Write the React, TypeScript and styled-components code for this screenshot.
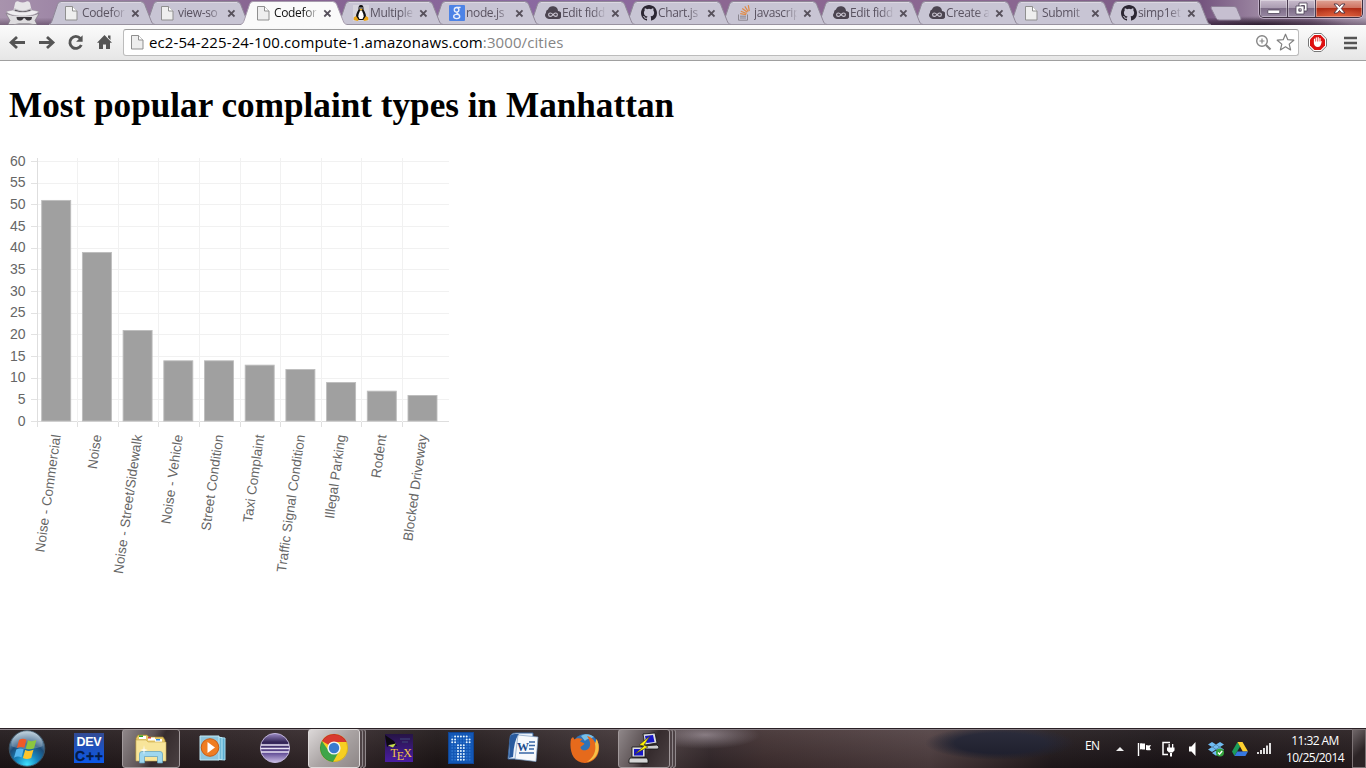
import React from "react";
import styled, { createGlobalStyle, css } from "styled-components";

const UI_FONT = '"Open Sans", "Noto Sans", sans-serif';

const GlobalStyle = createGlobalStyle`
  * { box-sizing: border-box; }
  html, body { margin: 0; padding: 0; background: #fff; overflow: hidden; }
  svg { display: block; }
`;

const Desktop = styled.div`
  width: 1366px;
  height: 768px;
  display: flex;
  flex-direction: column;
  overflow: hidden;
  font-family: ${UI_FONT};
`;

/* ---------- title bar ---------- */

const TitleBar = styled.header`
  height: 25px;
  flex: none;
  display: flex;
  align-items: flex-start;
  position: relative;
  background:
    linear-gradient(180deg, rgba(0, 0, 0, 0) 70%, rgba(30, 10, 30, 0.35) 100%),
    radial-gradient(90px 9px at 1260px 25px, rgba(25, 12, 28, 0.8), transparent),
    linear-gradient(90deg, #a893ad 0%, #9c84a5 5%, #866390 20%, #8b6aa3 42%, #8c6792 52%, #8a6791 75%, #75557f 88%, #9a84a0 92%, #8d7593 96%, #b3a3b8 100%);
`;

const Incognito = styled.div`
  width: 49px;
  height: 25px;
  flex: none;
`;

const TabList = styled.nav`
  display: flex;
`;

const TabItem = styled.div<{ $active?: boolean; $order: number }>`
  width: 96px;
  height: 25px;
  flex: none;
  position: relative;
  z-index: ${(p) => (p.$active ? 30 : p.$order)};
  display: flex;
  align-items: center;
  padding: 1px 0 0 16px;
  color: ${(p) => (p.$active ? "#111" : "#5a5361")};
`;

const TabShape = styled.svg`
  position: absolute;
  left: 0;
  top: 0;
  z-index: -1;
`;

const TabIcon = styled.span`
  width: 16px;
  height: 16px;
  flex: none;
  margin-right: 1px;
`;

const TabTitle = styled.span`
  width: 43px;
  height: 17px;
  line-height: 16px;
  font-size: 12px;
  letter-spacing: -0.35px;
  white-space: nowrap;
  mask-image: linear-gradient(90deg, #000 70%, rgba(0, 0, 0, 0.25) 96%, transparent 100%);
`;

const TabClose = styled.svg`
  margin-left: 6px;
  flex: none;
`;

const NewTab = styled.svg`
  margin-left: 9px;
  flex: none;
`;

const WindowControls = styled.div`
  position: absolute;
  right: 3px;
  top: 0;
  width: 104px;
  height: 18px;
  display: flex;
  border: 1px solid #3b2d3f;
  border-top: 0;
  border-radius: 0 0 5px 5px;
  box-shadow: 0 0 0 1px rgba(230, 215, 235, 0.55);
  overflow: hidden;
`;

const ControlButton = styled.button<{ $kind?: "close" }>`
  width: 28px;
  flex: ${(p) => (p.$kind ? "1" : "none")};
  height: 17px;
  padding: 0;
  border: 0;
  border-right: 1px solid #4a3b50;
  box-shadow: inset 0 0 0 1px rgba(255, 255, 255, 0.35);
  display: flex;
  justify-content: center;
  align-items: center;
  background: linear-gradient(#c9bccd 0%, #ab9db2 45%, #7e6d88 50%, #9888a2 100%);
  ${(p) =>
    p.$kind &&
    css`
      border-right: 0;
      background: radial-gradient(30px 9px at 50% 100%, #e5603c, transparent),
        linear-gradient(#dfa396 0%, #cf7361 45%, #b02c16 50%, #c04a2e 100%);
    `}
`;

/* ---------- toolbar ---------- */

const Toolbar = styled.div`
  height: 36px;
  flex: none;
  display: flex;
  align-items: center;
  padding: 0 9px 0 9px;
  background: linear-gradient(#fbfbfb, #e6e6e6);
  border-bottom: 1px solid #a0a0a0;
`;

const NavButtons = styled.div`
  width: 114px;
  height: 36px;
  flex: none;
`;

const AddressBar = styled.div`
  flex: 1;
  height: 27px;
  margin-top: -1px;
  display: flex;
  align-items: center;
  padding: 0 3px 0 7px;
  background: #fff;
  border: 1px solid #bcbcbc;
  border-top-color: #9c9c9c;
  border-radius: 3px;
`;

const Url = styled.span`
  flex: 1;
  margin-left: 2px;
  font-size: 15px;
  line-height: 20px;
  letter-spacing: 0.1px;
  color: #000;
  white-space: nowrap;
`;

const UrlTail = styled.span`
  color: #858585;
`;

const ToolbarIcons = styled.div`
  width: 49px;
  display: flex;
  align-items: center;
  justify-content: space-between;
  margin-left: 9px;
`;

/* ---------- page ---------- */

const Page = styled.main`
  flex: 1;
  background: #fff;
  padding: 22px 9px 0;
  overflow: hidden;
`;

const Heading = styled.h1`
  margin: 0;
  height: 67px;
  font: bold 35.2px/45px "Liberation Serif", "Times New Roman", serif;
  color: #000;
  white-space: nowrap;
`;

const Chart = styled.svg`
  font-family: "Liberation Sans", Arial, sans-serif;
  font-size: 13.5px;
  fill: #666;
`;

/* ---------- taskbar ---------- */

const Taskbar = styled.footer`
  height: 40px;
  flex: none;
  display: flex;
  align-items: stretch;
  border-top: 1px solid #2a2025;
  box-shadow: inset 0 1px 0 #8d848a;
  color: #fff;
  background:
    linear-gradient(180deg, rgba(255, 255, 255, 0.08), rgba(0, 0, 0, 0.12)),
    radial-gradient(75px 17px at 1000px 14px, #1b1c2c 60%, transparent 100%),
    radial-gradient(55px 14px at 705px 6px, #82757c, transparent),
    linear-gradient(90deg, #1d1517 0%, #2a1f21 18%, #33272a 25%, #1c1415 32%, #352a2c 42%, #46393b 49%, #33272a 52%, #402f30 56%, #4f3e40 68%, #21191c 77%, #1a1316 85%, #251b1d 100%);
`;

const StartSlot = styled.div`
  width: 58px;
  flex: none;
  padding: 1px 0 0 8px;
`;

const TaskSlot = styled.div`
  width: 62px;
  flex: none;
  display: flex;
  justify-content: center;
`;

const TaskButton = styled.div<{ $look: "plain" | "open" | "active"; $stacked?: boolean }>`
  width: ${(p) => (p.$stacked ? 52 : 58)}px;
  height: 39px;
  display: flex;
  align-items: center;
  justify-content: center;
  padding-bottom: 2px;
  border: 1px solid transparent;
  border-radius: 3px;
  ${(p) =>
    p.$look === "open" &&
    css`
      border-color: #a29a9c;
      background: linear-gradient(115deg, #8f8789 0%, #5c5254 45%, #352b2d 60%, #4a4042 100%);
    `}
  ${(p) =>
    p.$look === "active" &&
    css`
      border-color: #dedada;
      background: linear-gradient(135deg, #dcd8d8 0%, #aaa4a4 50%, #8e8787 100%);
    `}
`;

const StackEdge = styled.div`
  width: 3px;
  height: 39px;
  border: 1px solid #8f878a;
  border-left: 0;
  border-radius: 0 3px 3px 0;
  background: #4d4245;
`;

const Tray = styled.div`
  margin-left: auto;
  display: flex;
  align-items: center;
`;

const Language = styled.span`
  width: 31px;
  font-size: 12px;
  letter-spacing: -0.7px;
  margin-top: -6px;
`;

const TrayIcons = styled.div`
  width: 167px;
  height: 39px;
`;

const Clock = styled.div`
  width: 64px;
  text-align: center;
  font-size: 12px;
  line-height: 17px;
  letter-spacing: -0.58px;
  white-space: nowrap;
`;

const ShowDesktop = styled.div`
  width: 14px;
  height: 39px;
  margin-left: 5px;
  border: 1px solid #7c7375;
  background: linear-gradient(135deg, #6f6668, #2c2426 60%);
`;

/* ---------- icons ---------- */

const DocIcon = () => (
  <svg width="16" height="16" viewBox="0 0 16 16">
    <path d="M.5 1.500h7L12 6v9H.5z" fill="#eee" stroke="#8f8f8f" />
    <path d="M7.500 1.500V6H12" fill="#fff" stroke="#8f8f8f" />
  </svg>
);

const TuxIcon = () => (
  <svg width="16" height="16" viewBox="0 0 16 16">
    <rect width="16" height="16" fill="#d7d5de" />
    <path d="M8 0C5.800 0 5.300 1.800 5.500 4.500 4.500 6.500 3 8.500 3 11.500L5 15h6l2-3.500c0-3-1.500-5-2.500-7C10.700 1.800 10.200 0 8 0z" fill="#111" />
    <path d="M8 5C6.500 6.500 5.300 9 5.300 11.500L6.500 14h3l1.200-2.500C10.700 9 9.500 6.500 8 5z" fill="#fff" />
    <path d="M6.300 4.300L8 3.500l1.700.8L8 5.700z" fill="#f5b31a" />
    <circle cx="7" cy="3" r=".7" fill="#fff" />
    <circle cx="9" cy="3" r=".7" fill="#fff" />
    <path d="M.7 12.500L3 11l2.800 4-1.300 1-3.800-1zM15.300 12.500L13 11l-2.800 4 1.300 1 3.800-1z" fill="#eaa416" />
  </svg>
);

const GoogleIcon = () => (
  <svg width="16" height="16" viewBox="0 0 16 16">
    <rect width="16" height="16" rx="1" fill="#4d83e6" />
    <g fill="none" stroke="#e9effc" strokeWidth="1.400">
      <ellipse cx="7.600" cy="4.800" rx="2.300" ry="2.300" />
      <path d="M7.600 2.400h4" />
      <path d="M8.500 7.100c-2 1.200.5 1.400 1.700 2.600" />
      <ellipse cx="7.700" cy="11.500" rx="3" ry="2.100" />
    </g>
  </svg>
);

const FiddleIcon = () => (
  <svg width="16" height="16" viewBox="0 0 16 16">
    <path d="M4 14a3.800 3.800 0 0 1-3-6.300A3 3 0 0 1 3 4.500 5.200 5.200 0 0 1 13 6a4 4 0 0 1-.8 8z" fill="#4b4450" />
    <path d="M8 9.700C6.800 8.200 6 8 5.300 8a1.700 1.700 0 0 0 0 3.400C6.600 11.400 7 10.600 8 9.700s1.600-1.700 2.700-1.700a1.700 1.700 0 0 1 0 3.400c-1 0-1.600-.6-2.700-1.700z" fill="none" stroke="#cbc6d2" strokeWidth="1.100" />
  </svg>
);

const GithubIcon = () => (
  <svg width="16" height="16" viewBox="0 0 16 16">
    <path
      fill="#2c2733"
      d="M8 0C3.580 0 0 3.580 0 8c0 3.540 2.290 6.530 5.470 7.590.4.070.55-.17.55-.38v-1.490c-2.010.37-2.530-.49-2.690-.94-.09-.23-.48-.94-.82-1.130-.28-.15-.68-.52-.01-.53.63-.01 1.080.58 1.230.82.72 1.210 1.870.87 2.330.66.07-.52.28-.87.51-1.070-1.780-.2-3.640-.89-3.640-3.950 0-.87.31-1.590.82-2.150-.08-.2-.36-1.020.08-2.120 0 0 .67-.21 2.200.82a7.400 7.400 0 0 1 4 0c1.530-1.040 2.200-.82 2.200-.82.44 1.100.16 1.920.08 2.120.51.56.82 1.270.82 2.150 0 3.070-1.870 3.750-3.650 3.950.29.25.54.73.54 1.480v2.200c0 .21.15.46.55.38A8 8 0 0 0 16 8c0-4.420-3.580-8-8-8z"
    />
  </svg>
);

const StackIcon = () => (
  <svg width="16" height="16" viewBox="0 0 16 16" fill="none">
    <path d="M1.500 9.500v5.700h9V9.500" stroke="#8a8690" />
    <path d="M3 13h6M3 11.200h6" stroke="#8a8690" />
    <path d="M3.200 8.700l6 1M3.800 6.200l5.800 2.300M5.300 3.500l5 3.800M7.800 1.300l3.400 5.200M11.300.2l1 6" stroke="#e08a45" strokeWidth="1.200" />
  </svg>
);

type IconName = "doc" | "tux" | "google" | "fiddle" | "github" | "stack";

const FAVICONS: Record<IconName, React.FC> = {
  doc: DocIcon,
  tux: TuxIcon,
  google: GoogleIcon,
  fiddle: FiddleIcon,
  github: GithubIcon,
  stack: StackIcon,
};

const TABS: { icon: IconName; title: string; active?: boolean }[] = [
  { icon: "doc", title: "Codefor" },
  { icon: "doc", title: "view-so" },
  { icon: "doc", title: "Codefor", active: true },
  { icon: "tux", title: "Multiple" },
  { icon: "google", title: "node.js" },
  { icon: "fiddle", title: "Edit fidd" },
  { icon: "github", title: "Chart.js" },
  { icon: "stack", title: "javascrip" },
  { icon: "fiddle", title: "Edit fidd" },
  { icon: "fiddle", title: "Create a" },
  { icon: "doc", title: "Submit" },
  { icon: "github", title: "simp1et" },
];

const Tab = ({ icon, title, active, order }: { icon: IconName; title: string; active?: boolean; order: number }) => {
  const Icon = FAVICONS[icon];
  return (
    <TabItem $active={active} $order={order}>
      <TabShape width="108" height="25" viewBox="0 0 108 25">
        <path
          d="M-.5 24.500C2 24 2.500 22 3.300 20L8.500 4.500Q9.500 1.500 12 1.500H91.500Q94.500 1.500 95.700 4.500L102 20.500C103 23 103.500 24 106 24.500V25H-.5z"
          fill={active ? "#fafafa" : "#c8c5d4"}
        />
        <path
          d="M-.5 24.500C2 24 2.500 22 3.300 20L8.500 4.500Q9.500 1.500 12 1.500H91.500Q94.500 1.500 95.700 4.500L102 20.500C103 23 103.500 24 106 24.500"
          fill="none"
          stroke={active ? "#a79cad" : "#8f8797"}
        />
        {!active && <path d="M1 24.500H105" stroke="#98929f" />}
        {!active && <path d="M12 2.500H92" stroke="#dcd7e2" />}
      </TabShape>
      <TabIcon>
        <Icon />
      </TabIcon>
      <TabTitle>{title}</TabTitle>
      <TabClose width="9" height="9" viewBox="0 0 9 9">
        <path d="M1.300 1.300l6.200 6.200M7.500 1.300L1.300 7.500" stroke="#57515c" strokeWidth="1.800" />
      </TabClose>
    </TabItem>
  );
};

const SpyIcon = () => (
  <svg width="49" height="25" viewBox="0 0 49 25">
    <path d="M8 24.500l2-4-4-7 7 2h19l7-2-4 7 2 4z" fill="#dedcdf" stroke="#77727a" strokeWidth=".6" />
    <path d="M13 12l2-8.500C15.500 1.500 17 .8 19 1.700c2.500 1 5 1 7 0 2-.9 3.600-.2 4.100 1.800L32 12z" fill="#e6e4e7" />
    <path d="M14.500 8c5 3.200 11.500 3.200 16.500 0l1 5H13.500z" fill="#bdb9c0" />
    <path d="M15 10.300c5 2.200 10.500 2.200 15.500 0" stroke="#47424a" strokeWidth="1.200" fill="none" />
    <path d="M6 11.500l7-1.500c4 2.800 15 2.800 19 0l7 1.500c-3 3.200-8 4.500-16.500 4.500S9 14.700 6 11.500z" fill="#efedf0" stroke="#98939a" strokeWidth=".5" />
    <path d="M16.500 17h15.500l-.4 2c-.8 2-5.500 2.300-6.600-.8h-1.500c-1.100 3.100-5.800 2.800-6.600.8z" fill="#3b373c" />
    <path d="M13 24.500l6-1.500h10l6 1.500z" fill="#a5a1a7" />
  </svg>
);

const NavIcons = () => (
  <svg width="114" height="36" viewBox="0 0 114 36" fill="none" stroke="#555" strokeWidth="2.800">
    <path d="M16 17.500H3M8 12l-6 5.500L8 23" />
    <path d="M30 17.500h13M38 12l6 5.500L38 23" />
    <path d="M72.300 20a6 6 0 1 1-.9-6.500" />
    <path d="M73.600 10.200v6.500h-6.500z" fill="#555" stroke="none" />
    <path d="M88 17.700L95.500 10l7.500 7.700h-2V24h-4v-4.500h-3V24h-4v-6.300zM99 10.500h2.500V15L99 12.500z" fill="#555" stroke="none" />
  </svg>
);

const ZoomIcon = () => (
  <svg width="17" height="17" viewBox="0 0 17 17" fill="none" stroke="#858585">
    <circle cx="7" cy="7" r="5.300" strokeWidth="1.400" />
    <path d="M11 11l4.500 4.500" strokeWidth="2.200" />
    <path d="M4.500 7h5M7 4.500v5" strokeWidth="1.200" />
  </svg>
);

const StarIcon = () => (
  <svg width="19" height="18" viewBox="0 0 19 18">
    <path d="M9.500 1.200l2.300 5.500 6 .5-4.600 3.900 1.400 5.800-5.100-3.100-5.100 3.100 1.400-5.800L1.200 7.200l6-.5z" fill="#fff" stroke="#7f7f7f" strokeWidth="1.200" strokeLinejoin="round" />
  </svg>
);

const AddressActions = styled.div`
  display: flex;
  align-items: center;
  gap: 4px;
`;

const StopIcon = () => (
  <svg width="19" height="19" viewBox="0 0 19 19">
    <path d="M5.800.5h7.400l5.300 5.300v7.400l-5.300 5.300H5.800L.5 13.200V5.800z" fill="#fff" stroke="#777" />
    <path d="M6.400 2h6.200L17 6.400v6.200L12.600 17H6.400L2 12.600V6.400z" fill="#de1010" />
    <path d="M6.500 9V6.200M8.300 9V4.900M10.200 9V4.500M12 9V5.500" stroke="#fff" strokeWidth="1.200" strokeLinecap="round" />
    <path d="M5.900 8.500h6.700l1.200-.6-.6 2.800c-.5 2-1.500 3.300-3.400 3.300-2.300 0-3.500-1.300-3.900-3.500z" fill="#fff" />
  </svg>
);

const MenuIcon = () => (
  <svg width="13" height="14" viewBox="0 0 13 14">
    <path d="M0 2h13M0 7h13M0 12h13" stroke="#555" strokeWidth="2.600" />
  </svg>
);

/* ---------- chart ---------- */

const COMPLAINTS = [
  { label: "Noise - Commercial", count: 51 },
  { label: "Noise", count: 39 },
  { label: "Noise - Street/Sidewalk", count: 21 },
  { label: "Noise - Vehicle", count: 14 },
  { label: "Street Condition", count: 14 },
  { label: "Taxi Complaint", count: 13 },
  { label: "Traffic Signal Condition", count: 12 },
  { label: "Illegal Parking", count: 9 },
  { label: "Rodent", count: 7 },
  { label: "Blocked Driveway", count: 6 },
];

const BASE = 271;
const AXIS_X = 28;
const STEP = 40.7;
const UNIT = 4.335;

const ComplaintChart = () => (
  <Chart width="445" height="440" viewBox="0 0 445 440">
    {Array.from({ length: 13 }, (_, i) => {
      const y = Math.round(BASE - i * 5 * UNIT);
      return (
        <g key={i}>
          <rect x="22" y={y} width="418" height="1" fill={i ? "#f1f1f1" : "#dedede"} />
          <rect x="22" y={y} width="6" height="1" fill="#e2e2e2" />
          <text x="16.600" y={BASE - i * 5 * UNIT + 4.800} textAnchor="end" fontSize="14">
            {i * 5}
          </text>
        </g>
      );
    })}
    {COMPLAINTS.map(({ label, count }, i) => {
      const x = AXIS_X + i * STEP;
      const lineX = Math.floor(AXIS_X + i * 40.6);
      const top = BASE - count * UNIT;
      return (
        <g key={label}>
          <rect x={lineX} y="8" width="1" height="269" fill={i ? "#f1f1f1" : "#dedede"} />
          <rect x={lineX} y={BASE + 1} width="1" height="5" fill="#e0e0e0" />
          <rect x={x + 4.700} y={top + 0.5} width="29" height={BASE - top - 0.5} fill="#a0a0a0" stroke="#bdbdbd" strokeWidth=".9" />
          <text textAnchor="end" transform={`translate(${x + 23.800} 285.300) rotate(-82)`}>
            {label}
          </text>
        </g>
      );
    })}
  </Chart>
);

/* ---------- taskbar icons ---------- */

const StartOrb = () => (
  <svg width="38" height="38" viewBox="0 0 38 38">
    <defs>
      <radialGradient id="orb" cx=".5" cy=".95" r=".9">
        <stop offset="0" stopColor="#3fe3ff" />
        <stop offset=".35" stopColor="#1784bd" />
        <stop offset=".65" stopColor="#1d4c78" />
        <stop offset="1" stopColor="#a3bccd" />
      </radialGradient>
    </defs>
    <circle cx="19" cy="18.500" r="17.800" fill="url(#orb)" stroke="#3c5567" />
    <path d="M3.500 16a15.500 15.500 0 0 1 31 0C28 20 10 20 3.500 16z" fill="#fff" opacity=".22" />
    <path d="M11 10c2.800-1.700 5-1.500 7.500-.2l-2.200 8c-2.500-1.200-4.700-1.300-7.500.2z" fill="#ef5a28" />
    <path d="M20 10.300c2.800 1.300 5.300 1.100 8.400-.3l-2.300 8.200c-3 1.400-5.600 1.400-8.300.2z" fill="#8cc63f" />
    <path d="M8.300 19.500c2.700-1.400 5-1.300 7.400-.2l-2.200 8.200c-2.500-1.200-4.700-1.300-7.500.2z" fill="#55b5ee" />
    <path d="M17.200 20c2.800 1.300 5.300 1.100 8.300-.2L23.200 28c-3 1.400-5.600 1.400-8.300.1z" fill="#fdc52c" />
  </svg>
);

const DevIcon = () => (
  <svg width="30" height="30" viewBox="0 0 30 30">
    <defs>
      <linearGradient id="dev" x2="0" y2="1">
        <stop offset="0" stopColor="#324b93" />
        <stop offset="1" stopColor="#0b58ea" />
      </linearGradient>
    </defs>
    <rect width="30" height="30" fill="url(#dev)" />
    <g fontFamily="Liberation Sans, sans-serif" fontWeight="700">
      <text x="2.500" y="12.500" fontSize="12.500" fill="#fff" textLength="25">DEV</text>
      <text x="1" y="28" fontSize="14" fill="#061b45" stroke="#061b45" strokeWidth=".3" textLength="28">C++</text>
    </g>
  </svg>
);

const ExplorerIcon = () => (
  <svg width="34" height="32" viewBox="0 0 34 32">
    <path d="M2 6l2-3h9l2 2h14l2 3v20H2z" fill="#e8c966" stroke="#9e8434" strokeWidth=".7" />
    <path d="M5 4h7v3H5zM14 5.500h7v3h-7zM21 7h7v3h-7z" fill="#fff" />
    <path d="M5 3.500h4v1.500H5z" fill="#29a329" />
    <path d="M14 5h3v1.500h-3z" fill="#d64135" />
    <path d="M22 7h4v1.500h-4z" fill="#2e8be0" />
    <path d="M2 8h10l2 2h18v19H2z" fill="#f8e59a" stroke="#c6aa50" strokeWidth=".6" />
    <path d="M5.500 31V22q0-2.500 2.500-2.500h18q2.500 0 2.500 2.500v9h-5v-6.500h-13V31z" fill="#9ed7ef" stroke="#5d9ebc" strokeWidth=".7" />
    <path d="M10 13l.7 4 3.300 1-3.300 1-.7 4-.7-4L6 18l3.300-1z" fill="#fff" opacity=".8" />
  </svg>
);

const PlayerIcon = () => (
  <svg width="28" height="28" viewBox="0 0 28 28">
    <path d="M9 3l17 1v22l-17-1z" fill="#5daed0" stroke="#a8dff3" />
    <path d="M6 2.500l17 1v22l-17-1z" fill="#6fb9d6" stroke="#b7e7f7" />
    <path d="M1 2h19v24H1z" fill="#8fc6dd" stroke="#c2e9f5" />
    <circle cx="11" cy="13.500" r="8.800" fill="#ef7d22" stroke="#c85b13" />
    <path d="M8.500 8l7.500 5.500L8.500 19z" fill="#fff" />
  </svg>
);

const EclipseIcon = () => (
  <svg width="32" height="32" viewBox="0 0 32 32">
    <defs>
      <linearGradient id="ecl" x2="0" y2="1">
        <stop offset="0" stopColor="#9c8bc4" />
        <stop offset=".3" stopColor="#332556" />
        <stop offset=".65" stopColor="#5b4690" />
        <stop offset="1" stopColor="#cdbfe8" />
      </linearGradient>
    </defs>
    <circle cx="16" cy="16" r="14.600" fill="url(#ecl)" stroke="#bfb3d8" />
    <path d="M2 13h28M1.500 16.500h29M2 20h28" stroke="#e9e4f5" strokeWidth="1.400" />
  </svg>
);

const ChromeIcon = () => (
  <svg width="30" height="30" viewBox="0 0 30 30">
    <circle cx="15" cy="15" r="14" fill="#f7cf22" />
    <path d="M15 15L2.900 8A14 14 0 0 1 27.700 9H15z" fill="#d93a2f" />
    <path d="M2.900 8A14 14 0 0 0 14 29l6.200-11L9.800 18z" fill="#3fa548" />
    <circle cx="15" cy="15" r="6.600" fill="#f5f5f5" />
    <circle cx="15" cy="15" r="5.200" fill="#3a7bd0" />
    <circle cx="15" cy="15" r="13.700" fill="none" stroke="#000" strokeOpacity=".2" strokeWidth=".6" />
  </svg>
);

const TexIcon = () => (
  <svg width="28" height="28" viewBox="0 0 28 28">
    <defs>
      <linearGradient id="tex" x2="0" y2="1">
        <stop offset="0" stopColor="#261445" />
        <stop offset="1" stopColor="#4a1da3" />
      </linearGradient>
    </defs>
    <rect width="28" height="28" fill="url(#tex)" />
    <path d="M0 1l9 6 3 5-7-2-3 3z" fill="#0c0910" />
    <path d="M3 11.500l8-2-3 4z" fill="#c7e04a" />
    <path d="M15 5h10M17 8h6" stroke="#414a7a" />
    <text x="5.500" y="23" fontFamily="Liberation Serif, serif" fontSize="12" fill="#f1c54a">
      T<tspan dx="-1" dy="3">E</tspan><tspan dx="-1" dy="-3">X</tspan>
    </text>
  </svg>
);

const T_DOTS = ["0111110", "1100011", "1100011", "0011100", "0011100", "0011100", "0011100", "0011100", "0011100"];

const TerminalIcon = () => (
  <svg width="26" height="32" viewBox="0 0 26 32">
    <rect x=".5" y=".5" width="25" height="31" fill="#1357b5" stroke="#0f4594" />
    {T_DOTS.flatMap((row, y) =>
      row.split("").map((on, x) => (
        <rect key={`${x}-${y}`} x={3.200 + x * 2.900} y={3.500 + y * 2.900} width="2" height="2" rx="1" fill={on === "1" ? "#e2f4ff" : "#2d74cd"} />
      ))
    )}
  </svg>
);

const WordIcon = () => (
  <svg width="32" height="32" viewBox="0 0 32 32">
    <path d="M3 6q0-5 6-5h17v26H1z" fill="#eaf1fa" stroke="#37659e" />
    <path d="M3 6q0-4 5-4h4Q7 8 6 25l-4 1z" fill="#285a9e" />
    <path d="M11 3l20 2-2 24.500L8 27z" fill="#f7f9fc" stroke="#7d9cc2" strokeWidth=".7" />
    <path d="M22 10h6M22 13.500h6M22 17h5M12 21h15" stroke="#3a67a5" strokeWidth="1.600" />
    <text x="10" y="18.500" fontFamily="Liberation Serif, serif" fontSize="12" fontWeight="700" fill="#204c8c">W</text>
  </svg>
);

const FirefoxIcon = () => (
  <svg width="32" height="32" viewBox="0 0 32 32">
    <circle cx="16.500" cy="15.500" r="13.500" fill="#2f73b8" />
    <path d="M12 4c4-3 10-2 13 1-3 2-7 1-9 4z" fill="#79bfe5" />
    <path d="M2 7l2-2 1.500 2.500C8 5.500 11 6 13.500 7L11 9.500c1.500 1 3.500 1 4.500 2.500l-4 3c0 4 6 4.500 8.500 1 3-4-.5-10-2-12 5 1 8 5 8.500 8l1-5c5 8 3 23-11.500 24C3 31 0 17 2 7z" fill="#e66a1c" />
    <path d="M27.500 7c5 9 1 21-10 23 7-4 10-11 8.500-18z" fill="#f6c046" />
  </svg>
);

const PuttyIcon = () => (
  <svg width="32" height="32" viewBox="0 0 32 32">
    <g stroke="#111" strokeWidth=".8">
      <path d="M15 2l12-1 2 10-12 2z" fill="#ddd" />
      <path d="M14 14l15-1 2 2-1 2H14z" fill="#ccc" />
      <path d="M4 15h13v10H4z" fill="#ddd" />
      <path d="M2 26h17l1 2v3H1v-3z" fill="#d4d4d4" />
    </g>
    <path d="M17 4l8-1 1.500 7-8 1zM6 17h9v6.500H6z" fill="#1717c8" />
    <path d="M22 4L11 13l5 1L7 22l13-7-4-2z" fill="#fff200" stroke="#333" strokeWidth=".6" />
  </svg>
);

const TASKS: { name: string; Icon: React.FC; look: "plain" | "open" | "active"; stack?: number }[] = [
  { name: "dev", Icon: DevIcon, look: "plain" },
  { name: "explorer", Icon: ExplorerIcon, look: "open" },
  { name: "player", Icon: PlayerIcon, look: "plain" },
  { name: "eclipse", Icon: EclipseIcon, look: "plain" },
  { name: "chrome", Icon: ChromeIcon, look: "active", stack: 2 },
  { name: "tex", Icon: TexIcon, look: "plain" },
  { name: "terminal", Icon: TerminalIcon, look: "plain" },
  { name: "word", Icon: WordIcon, look: "plain" },
  { name: "firefox", Icon: FirefoxIcon, look: "plain" },
  { name: "putty", Icon: PuttyIcon, look: "open", stack: 2 },
];

const TrayGlyphs = () => (
  <svg width="167" height="39" viewBox="0 0 167 39">
    <path d="M0 22l4-4 4 4z" fill="#eee" />
    <path d="M22.500 14v13" stroke="#fff" strokeWidth="1.400" />
    <path d="M24 14.500c2-.8 3 .3 5 0v6c-2 .3-3-.8-5 0zM30 16c2 .6 3 .5 5 0l-1.300 2.500L35 21c-2 .6-3 .3-5 0z" fill="#fff" />
    <path d="M54 13.500h-7v12h5" fill="none" stroke="#fff" strokeWidth="1.500" />
    <path d="M51 18.500h7.500v3l-2 2h-3.500l-2-2zM52.500 15h1.300v3.500h-1.300zM56 15h1.300v3.500H56zM54 23v4.500h2V23z" fill="#fff" />
    <path d="M73 17.500h2.500L79.500 13v14l-4-4.500H73z" fill="#fff" />
    <path
      d="M96 13l4 2.500-4 2.500-4-2.500zM104 13l4 2.500-4 2.500-4-2.500zM96 18l4 2.500-4 2.500-4-2.500zM104 18l4 2.500-4 2.500-4-2.500zM96 24l4-2.500 4 2.500-4 2.800zM100 15.800l3.500 2.200-3.500 2.200-3.500-2.200z"
      fill="#6fbcf2"
    />
    <circle cx="104" cy="23.500" r="4" fill="#33a33c" />
    <path d="M102 23.500l1.500 1.700 2.700-3.200" stroke="#fff" strokeWidth="1.300" fill="none" />
    <path d="M121.500 13L116 22.500l2.500 4.500 5.600-9.500z" fill="#1b9c5a" />
    <path d="M121.500 13h5l5.500 9.500h-5.200z" fill="#fdd02f" />
    <path d="M121.200 22.500H132l-2.600 4.500h-10.900z" fill="#3778df" />
    <path d="M142 25v-2M145 25v-4M148 25v-6M151 25v-8.500M154 25V14" stroke="#fff" strokeWidth="1.700" />
  </svg>
);

export default function App() {
  return (
    <Desktop>
      <GlobalStyle />
      <TitleBar>
        <Incognito>
          <SpyIcon />
        </Incognito>
        <TabList>
          {TABS.map((tab, i) => (
            <Tab key={i} {...tab} order={TABS.length - i} />
          ))}
        </TabList>
        <NewTab width="36" height="25" viewBox="0 0 36 25">
          <path d="M2 6.500h22q2 0 2.800 1.800l4 9.500q.8 2.200-1.500 2.200H9q-2 0-3-2L1.200 8.500Q.5 6.500 2 6.500z" fill="#c6bfd0" stroke="#8d8096" />
        </NewTab>
        <WindowControls>
          <ControlButton aria-label="Minimize">
            <svg width="14" height="12" viewBox="0 0 14 12">
              <rect x=".8" y="7" width="12" height="3.500" rx=".5" fill="#fff" stroke="#4c4256" strokeWidth=".8" />
            </svg>
          </ControlButton>
          <ControlButton aria-label="Restore">
            <svg width="13" height="13" viewBox="0 0 13 13" fillRule="evenodd" fill="#fff" stroke="#4c4256" strokeWidth=".8">
              <path d="M4 1h8v8H4zm2.500 2.500v3h3v-3z" />
              <path d="M1 4h8v8H1zm2.800 2.800v2.400h2.400V6.800z" />
            </svg>
          </ControlButton>
          <ControlButton $kind="close" aria-label="Close">
            <svg width="13" height="11" viewBox="0 0 13 11">
              <path d="M1 1h3.300l2.200 2.500L8.700 1H12L8.300 5.500 12 10H8.700L6.500 7.500 4.300 10H1l3.700-4.500z" fill="#fff" stroke="#4a3040" strokeWidth=".9" />
            </svg>
          </ControlButton>
        </WindowControls>
      </TitleBar>

      <Toolbar>
        <NavButtons>
          <NavIcons />
        </NavButtons>
        <AddressBar>
          <DocIcon />
          <Url>
            ec2-54-225-24-100.compute-1.amazonaws.com<UrlTail>:3000/cities</UrlTail>
          </Url>
          <AddressActions>
            <ZoomIcon />
            <StarIcon />
          </AddressActions>
        </AddressBar>
        <ToolbarIcons>
          <StopIcon />
          <MenuIcon />
        </ToolbarIcons>
      </Toolbar>

      <Page>
        <Heading>Most popular complaint types in Manhattan</Heading>
        <ComplaintChart />
      </Page>

      <Taskbar>
        <StartSlot>
          <StartOrb />
        </StartSlot>
        {TASKS.map(({ name, Icon, look, stack = 0 }) => (
          <TaskSlot key={name}>
            <TaskButton $look={look} $stacked={stack > 0}>
              <Icon />
            </TaskButton>
            {Array.from({ length: stack }, (_, i) => (
              <StackEdge key={i} />
            ))}
          </TaskSlot>
        ))}
        <Tray>
          <Language>EN</Language>
          <TrayIcons>
            <TrayGlyphs />
          </TrayIcons>
          <Clock>
            <div>11:32 AM</div>
            <div>10/25/2014</div>
          </Clock>
          <ShowDesktop />
        </Tray>
      </Taskbar>
    </Desktop>
  );
}
